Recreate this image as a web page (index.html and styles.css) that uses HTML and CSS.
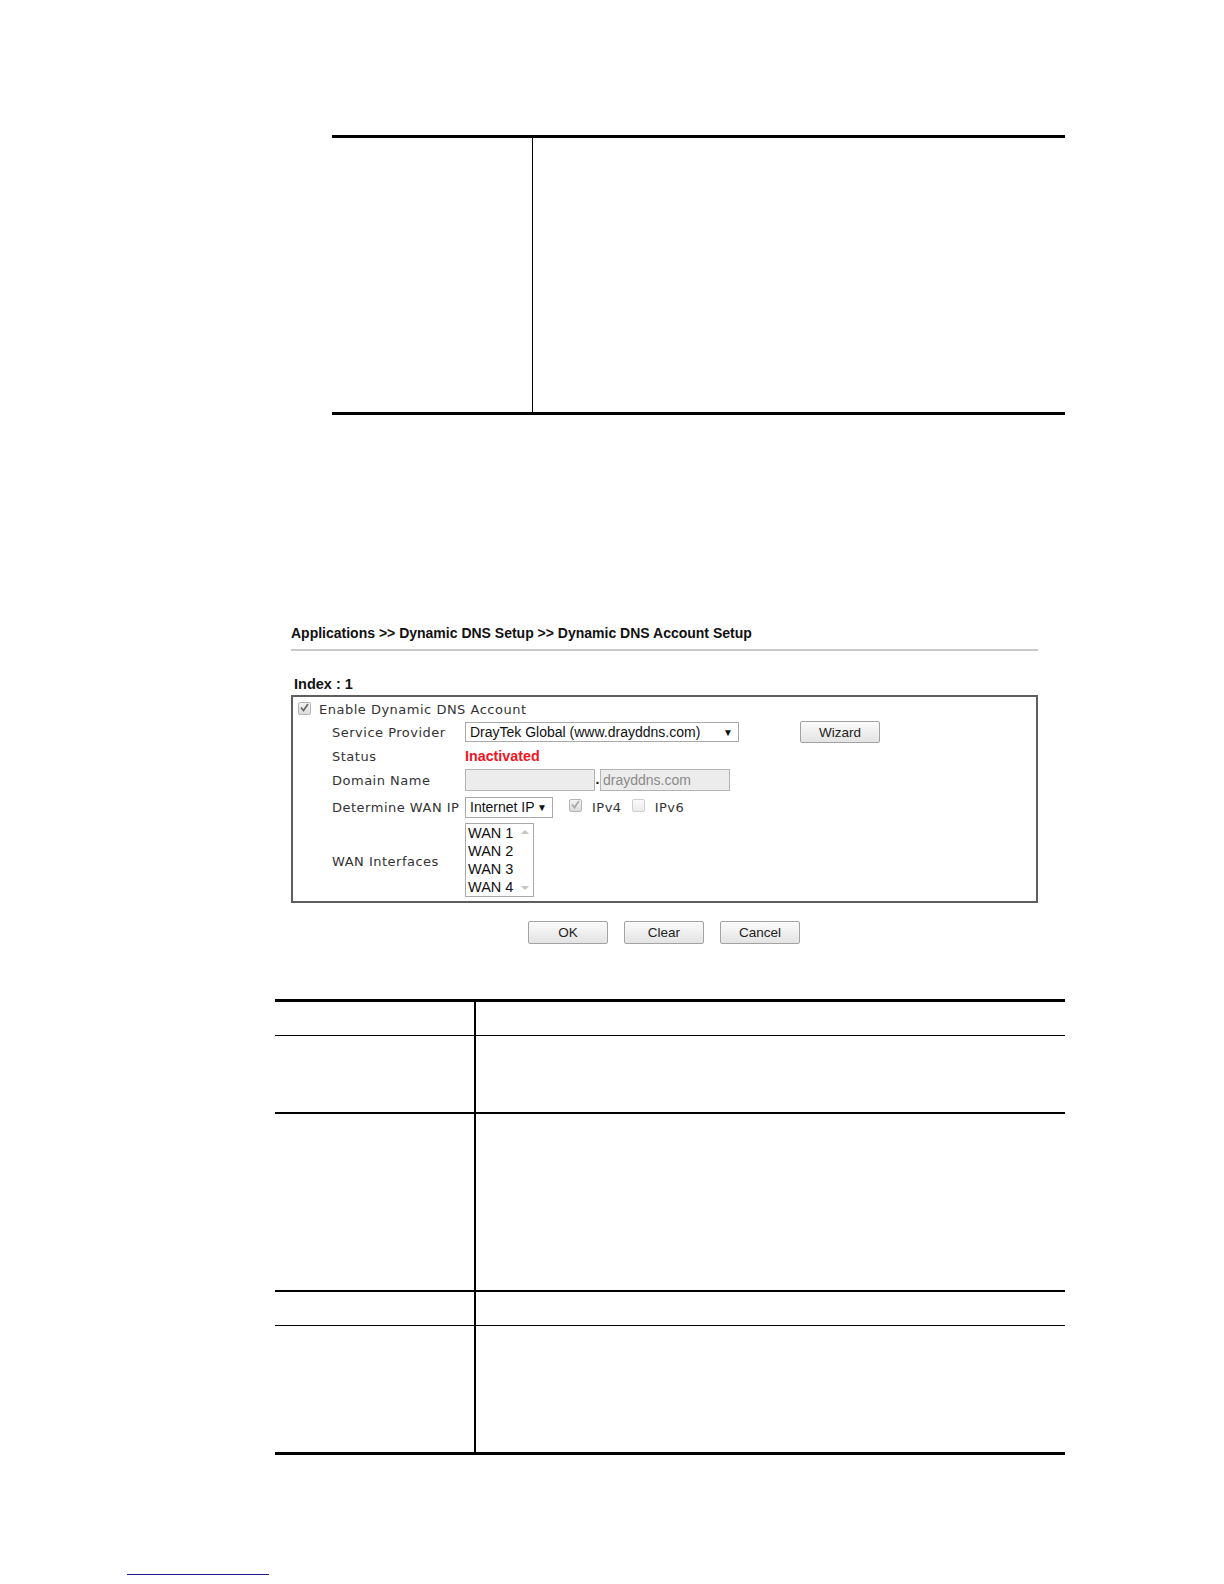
FILE: index.html
```html
<!DOCTYPE html>
<html>
<head>
<meta charset="utf-8">
<title>Dynamic DNS Account Setup</title>
<link rel="stylesheet" href="styles.css">
</head>
<body>
<div class="page">
  <div class="doc-table top-table">
    <div class="cell c1"></div>
    <div class="cell c2"></div>
  </div>

  <div class="ui">
    <div class="ui-title">Applications &gt;&gt; Dynamic DNS Setup &gt;&gt; Dynamic DNS Account Setup</div>
    <div class="ui-rule"></div>
    <div class="ui-index">Index : 1</div>
    <div class="ui-box">
      <div class="row r1">
        <span class="cb checked dark"><svg viewBox="0 0 13 13" width="13" height="13"><path d="M3 6.5 L5.5 9.5 L10 3" fill="none" stroke="#6b6b6b" stroke-width="1.8"/></svg></span>
        <span class="enable-text">Enable Dynamic DNS Account</span>
      </div>
      <div class="row r2">
        <span class="label">Service Provider</span>
        <span class="select sp-select"><span class="sel-text">DrayTek Global (www.drayddns.com)</span><span class="arrow">▼</span></span>
        <span class="btn wizard">Wizard</span>
      </div>
      <div class="row r3">
        <span class="label">Status</span>
        <span class="status">Inactivated</span>
      </div>
      <div class="row r4">
        <span class="label">Domain Name</span>
        <span class="input in1"></span><span class="dot">.</span><span class="input in2">drayddns.com</span>
      </div>
      <div class="row r5">
        <span class="label">Determine WAN IP</span>
        <span class="select wan-select"><span class="sel-text">Internet IP</span><span class="arrow">▼</span></span>
        <span class="cb checked light cb4"><svg viewBox="0 0 13 13" width="13" height="13"><path d="M3 6.5 L5.5 9.5 L10 3" fill="none" stroke="#a8a8a8" stroke-width="1.8"/></svg></span>
        <span class="cb-label">IPv4</span>
        <span class="cb cb6"></span>
        <span class="cb-label">IPv6</span>
      </div>
      <div class="row r6">
        <span class="label">WAN Interfaces</span>
        <div class="listbox">
          <div class="items">
            <div class="item">WAN 1</div>
            <div class="item">WAN 2</div>
            <div class="item">WAN 3</div>
            <div class="item">WAN 4</div>
          </div>
          <div class="scroll">
            <span class="tri up"></span>
            <span class="tri down"></span>
          </div>
        </div>
      </div>
    </div>
    <div class="ui-buttons">
      <span class="btn">OK</span>
      <span class="btn">Clear</span>
      <span class="btn">Cancel</span>
    </div>
  </div>

  <div class="doc-table low-table">
    <div class="lrow h33 thin"><div class="cell c1"></div><div class="cell c2"></div></div>
    <div class="lrow h76 thick"><div class="cell c1"></div><div class="cell c2"></div></div>
    <div class="lrow h176 thick"><div class="cell c1"></div><div class="cell c2"></div></div>
    <div class="lrow h33 thin"><div class="cell c1"></div><div class="cell c2"></div></div>
    <div class="lrow h126"><div class="cell c1"></div><div class="cell c2"></div></div>
  </div>

  <div class="footer-link"></div>
</div>
</body>
</html>
```

FILE: styles.css
```css
html, body {
  margin: 0;
  padding: 0;
  background: #ffffff;
}

.page {
  padding-top: 135px;
  font-family: "Liberation Sans", Arial, sans-serif;
}

/* document tables */
.top-table {
  margin-left: 332px;
  width: 733px;
  height: 274px;
  border-top: 3px solid #000;
  border-bottom: 3px solid #000;
  display: grid;
  grid-template-columns: 200px 1fr;
}
.top-table .c2 {
  border-left: 1px solid #000;
}

.low-table {
  margin-left: 275px;
  width: 790px;
  margin-top: 55px;
  border-top: 3px solid #000;
  border-bottom: 3px solid #000;
}
.lrow {
  display: grid;
  grid-template-columns: 199px 1fr;
}
.lrow .c2 {
  border-left: 2px solid #000;
}
.lrow.thin { border-bottom: 1px solid #000; }
.lrow.thick { border-bottom: 2px solid #000; }
.h33 { height: 33px; }
.h76 { height: 76px; }
.h176 { height: 176px; }
.h126 { height: 126px; }

/* UI screenshot */
.ui {
  margin-left: 291px;
  width: 747px;
  margin-top: 209px;
}
.ui-title {
  height: 18px;
  line-height: 18px;
  font-weight: bold;
  font-size: 14px;
  color: #111;
}
.ui-rule {
  margin-top: 7px;
  height: 2px;
  background: #c9c9c9;
}
.ui-index {
  margin-top: 24px;
  margin-left: 3px;
  height: 18px;
  line-height: 18px;
  font-weight: bold;
  font-size: 14.5px;
  color: #111;
}
.ui-box {
  margin-top: 2px;
  border: 2px solid #5e5e5e;
  padding-bottom: 1px;
  font-family: "DejaVu Sans", Verdana, sans-serif;
  font-size: 13px;
  color: #333;
}
.row {
  display: flex;
  align-items: center;
}
.r1 { height: 22px; padding-top: 1px; padding-left: 5px; }
.r2 { height: 24px; }
.r3 { height: 24px; }
.r4 { height: 24px; }
.r5 { height: 30px; }
.r6 { height: 78px; }

.label {
  width: 133px;
  margin-left: 39px;
  flex: none;
  letter-spacing: 0.5px;
}
.enable-text {
  margin-left: 8px;
  letter-spacing: 0.5px;
}

.cb {
  display: inline-block;
  width: 11px;
  height: 11px;
  border: 1px solid #b5b5b5;
  border-radius: 2px;
  background: linear-gradient(#f4f4f4, #dcdcdc);
  position: relative;
  flex: none;
}
.cb svg {
  position: absolute;
  left: -1px;
  top: -2px;
}
.cb.checked.dark { margin-top: -2px; }
.cb4 { margin-left: 16px; margin-top: -3px; }
.cb6 { margin-left: 10px; margin-top: -3px; border-color: #cfcfcf; background: linear-gradient(#fafafa, #ececec); }
.cb-label {
  margin-left: 10px;
  letter-spacing: 0.5px;
}

.select {
  display: inline-flex;
  align-items: center;
  justify-content: space-between;
  box-sizing: border-box;
  border: 1px solid #a9a9a9;
  background: #fff;
  font-family: "Liberation Sans", Arial, sans-serif;
  font-size: 14px;
  color: #111;
  padding: 0 5px 0 4px;
  flex: none;
}
.sp-select { width: 274px; height: 20px; }
.wan-select { width: 88px; height: 21px; }
.arrow {
  font-size: 10px;
  color: #111;
}

.btn {
  display: inline-flex;
  align-items: center;
  justify-content: center;
  box-sizing: border-box;
  width: 80px;
  height: 22px;
  border: 1px solid #a3a3a3;
  border-radius: 2px;
  background: linear-gradient(#fbfbfb, #e3e3e3);
  font-family: "Liberation Sans", Arial, sans-serif;
  font-size: 13.5px;
  color: #222;
  flex: none;
}
.wizard { margin-left: 61px; }

.status {
  color: #f0141e;
  font-weight: bold;
  font-family: "Liberation Sans", Arial, sans-serif;
  font-size: 14.3px;
}

.input {
  display: inline-flex;
  align-items: center;
  box-sizing: border-box;
  width: 130px;
  height: 22px;
  border: 1px solid #b4b4b4;
  background: #ececec;
  font-family: "Liberation Sans", Arial, sans-serif;
  font-size: 14px;
  color: #8a8a8a;
  padding-left: 2px;
  flex: none;
}
.dot {
  width: 5px;
  text-align: center;
  font-family: "Liberation Sans", Arial, sans-serif;
  font-weight: bold;
  font-size: 14px;
  color: #111;
  align-self: flex-end;
  line-height: 22px;
  margin-bottom: 2px;
}

.listbox {
  display: flex;
  box-sizing: border-box;
  width: 69px;
  height: 74px;
  border: 1px solid #a9a9a9;
  background: #fff;
  flex: none;
  align-self: flex-start;
  margin-top: 1px;
}
.items {
  flex: 1;
  font-family: "Liberation Sans", Arial, sans-serif;
  font-size: 14.5px;
  color: #111;
}
.item {
  height: 18px;
  line-height: 18px;
  padding-left: 2px;
}
.scroll {
  width: 17px;
  display: flex;
  flex-direction: column;
  justify-content: space-between;
  align-items: center;
  padding: 6px 0 6px;
  box-sizing: border-box;
}
.tri {
  width: 0;
  height: 0;
  border-left: 4px solid transparent;
  border-right: 4px solid transparent;
}
.tri.up { border-bottom: 4px solid #c4c4c4; }
.tri.down { border-top: 4px solid #c4c4c4; }

.ui-buttons {
  margin-top: 18px;
  display: flex;
  gap: 16px;
  padding-left: 237px;
}
.ui-buttons .btn { height: 23px; }

.footer-link {
  margin-top: 119px;
  margin-left: 127px;
  width: 142px;
  height: 1px;
  background: #1c1c8c;
}
```
